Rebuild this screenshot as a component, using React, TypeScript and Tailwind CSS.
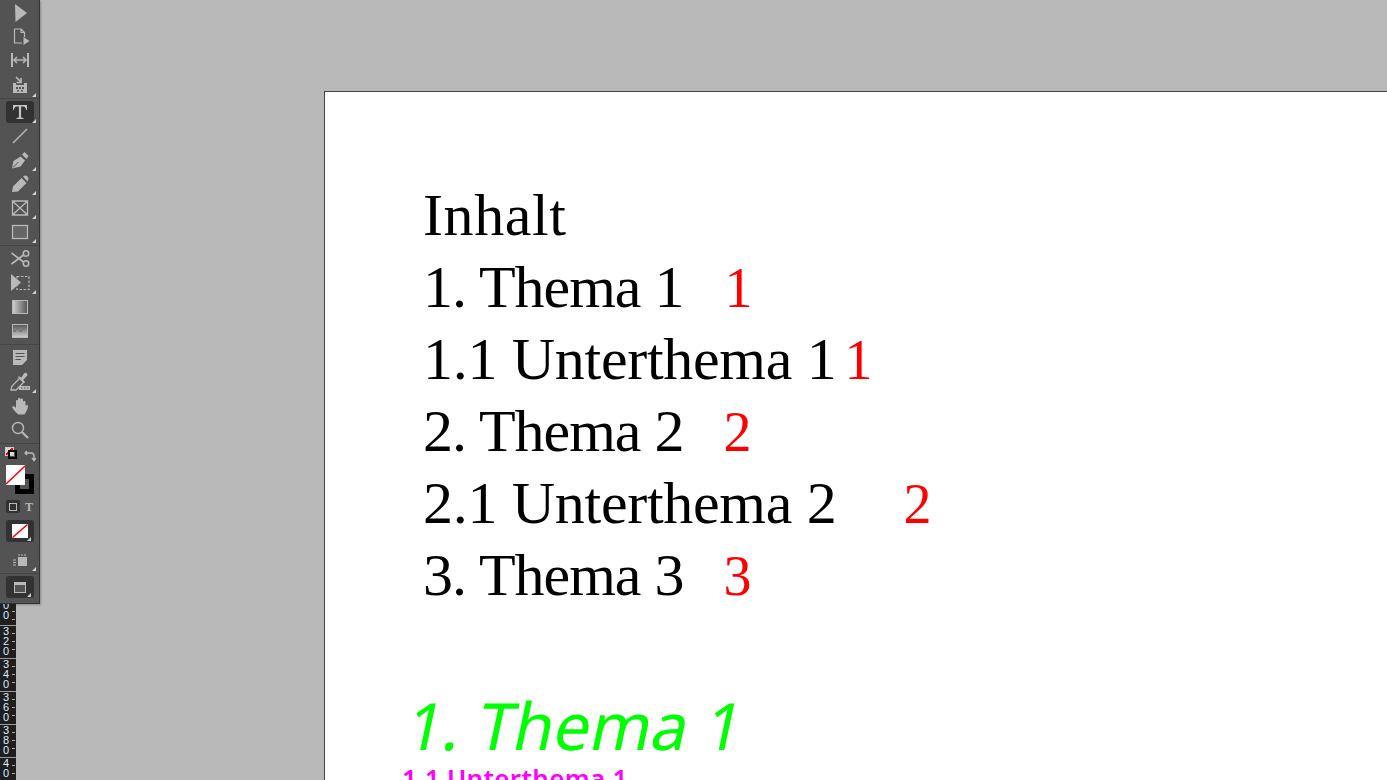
import React from 'react';

type Tool = {
  key: string;
  mt: string;
  corner?: boolean;
  active?: boolean;
  icon: React.ReactNode;
};

const Corner = () => (
  <svg className="absolute right-[3px] bottom-[1px]" width="4" height="4" viewBox="0 0 4 4">
    <path d="M4 0V4H0Z" fill="#d0d0d0" />
  </svg>
);

const groupOne: Tool[] = [
  { key: 'select', mt: 'mt-px', icon: <path d="M7 3L7.5 21L19 12Z" fill="#b9b9b9" /> },
  {
    key: 'page',
    mt: '-mt-px',
    icon: (
      <g>
        <path d="M6.5 5H13L16.5 8.5V13M14 19H6.5V5M13 5V8.5H16.5" fill="none" stroke="#b9b9b9" strokeWidth="1.2" />
        <path d="M15.5 13L15.5 21L21.5 17Z" fill="#b9b9b9" />
      </g>
    ),
  },
  {
    key: 'gap',
    mt: 'mt-0',
    icon: (
      <g stroke="#b9b9b9" fill="none" strokeWidth="1.5">
        <path d="M4 5V19M20 5V19" strokeWidth="2" />
        <path d="M6 12H18" />
        <path d="M9 9L6 12L9 15M15 9L18 12L15 15" />
      </g>
    ),
  },
  {
    key: 'collect',
    mt: 'mt-[2px]',
    corner: true,
    icon: (
      <g>
        <path d="M5 9H8V11H16V9H19V19H5Z" fill="#b9b9b9" />
        <path d="M8 3L13 8M13 4V8.5H8.5" stroke="#b9b9b9" strokeWidth="1.6" fill="none" />
        <path d="M8 13h2v2H8zM11 13h2v2h-2zM14 13h2v2h-2zM9 16h2v1.5H9zM13 16h2v1.5h-2z" fill="#535353" />
      </g>
    ),
  },
];

const groupTwo: Tool[] = [
  {
    key: 'type',
    mt: 'mt-px',
    corner: true,
    active: true,
    icon: <path d="M5 5H19V10H18.2C17.8 8 17 6.4 15 6.4H13.1V17.6L15.5 18V19H8.5V18L10.9 17.6V6.4H9C7 6.4 6.2 8 5.8 10H5Z" fill="#c4c4c4" />,
  },
  { key: 'line', mt: 'mt-0', icon: <path d="M5 19L19 5" stroke="#b9b9b9" strokeWidth="1.5" /> },
  {
    key: 'pen',
    mt: 'mt-0',
    corner: true,
    icon: (
      <g>
        <path d="M4 20.5L5.5 13L12.5 8.5L17 12.5L12.5 18.5Z" fill="#b9b9b9" />
        <path d="M14 6.5L16.5 4L20.5 8L18.5 11Z" fill="#b9b9b9" />
        <path d="M5 19.5L10.5 14" stroke="#535353" strokeWidth="1" />
      </g>
    ),
  },
  {
    key: 'pencil',
    mt: 'mt-0',
    corner: true,
    icon: <path d="M4 20L5 14.5L13.5 6L18.5 11L10 19.5ZM15 4.5L16.5 3.7C17.5 3.2 18.2 3.4 18.8 4L20 5.2C20.6 6 20.6 6.6 20.2 7.3L19.5 9.5Z" fill="#b9b9b9" />,
  },
  {
    key: 'frame',
    mt: 'mt-0',
    corner: true,
    icon: <path d="M4.5 5H19.5V19H4.5ZM4.5 5L19.5 19M19.5 5L4.5 19" fill="none" stroke="#b9b9b9" strokeWidth="1.3" />,
  },
  {
    key: 'rect',
    mt: 'mt-0',
    corner: true,
    icon: <rect x="4.5" y="5.5" width="15" height="13" fill="#666666" stroke="#b9b9b9" strokeWidth="1.3" />,
  },
];

const groupThree: Tool[] = [
  {
    key: 'scissors',
    mt: 'mt-0',
    icon: (
      <g fill="none" stroke="#b9b9b9" strokeWidth="1.6">
        <circle cx="18" cy="7.5" r="2.7" />
        <circle cx="18" cy="17.5" r="2.7" />
        <path d="M3.5 7L15.5 16M3.5 18L15.5 9" />
      </g>
    ),
  },
  {
    key: 'transform',
    mt: 'mt-px',
    corner: true,
    icon: (
      <g>
        <rect x="9" y="5.5" width="12" height="13" fill="none" stroke="#b9b9b9" strokeWidth="1.2" strokeDasharray="2.5 1.5" />
        <path d="M3 3L3 20L13 11.5Z" fill="#b9b9b9" />
      </g>
    ),
  },
  {
    key: 'gradient',
    mt: 'mt-0',
    icon: (
      <g>
        <defs>
          <linearGradient id="swatch" x1="0" x2="1" y1="0" y2="0">
            <stop offset="0" stopColor="#d0d0d0" />
            <stop offset="1" stopColor="#555555" />
          </linearGradient>
        </defs>
        <rect x="4.5" y="5.5" width="15" height="13" fill="url(#swatch)" stroke="#b9b9b9" strokeWidth="1" />
      </g>
    ),
  },
  {
    key: 'feather',
    mt: 'mt-0',
    icon: (
      <g>
        <defs>
          <linearGradient id="feather" x1="0" x2="0" y1="0" y2="1">
            <stop offset="0" stopColor="#555555" />
            <stop offset="1" stopColor="#d0d0d0" />
          </linearGradient>
        </defs>
        <rect x="4.5" y="5.5" width="15" height="13" fill="url(#feather)" stroke="#b9b9b9" strokeWidth="1" />
        <path d="M8 9h3v2H8zM14 9h3v2h-3zM5 11h3v2H5zM11 11h3v2h-3z" fill="#777777" />
      </g>
    ),
  },
];

const groupFour: Tool[] = [
  {
    key: 'note',
    mt: 'mt-0',
    icon: (
      <g>
        <path d="M5 5H19V15L14 20H5Z" fill="#b9b9b9" />
        <path d="M7.5 8.5H16.5M7.5 11.5H16.5M7.5 14.5H13" stroke="#535353" strokeWidth="1.2" />
      </g>
    ),
  },
  {
    key: 'eyedropper',
    mt: 'mt-px',
    corner: true,
    icon: (
      <g>
        <path d="M3 20L4 16L12 8L16 12L8 20Z" fill="none" stroke="#b9b9b9" strokeWidth="1.3" />
        <path d="M11 6L13 8L16 3.5C17 2.5 18.5 2.5 19 3.5C19.7 4.5 19.5 5.5 18.5 6.5L15 10L17 12L15.5 13L10 7.5Z" fill="#b9b9b9" />
        <path d="M11 16H22V20H11Z" fill="#b9b9b9" />
        <path d="M13 17.5h1.5v1H13zM16 17.5h1.5v1H16zM19 17.5h1.5v1H19z" fill="#535353" />
      </g>
    ),
  },
  {
    key: 'hand',
    mt: 'mt-0',
    icon: (
      <path d="M4 13C5 11.5 7 12 8 14V7C8 5.5 10 5.5 10 7V5C10 3.5 12.5 3.5 12.5 5V5.5C12.5 4 15 4 15 5.5V8C15 6.5 17.5 6.5 17.5 8V12C18 10.5 20 10.5 20 12C20 15 18 18 16.5 20.5H10.5C8 19 5.5 16 4 13Z" fill="#b9b9b9" />
    ),
  },
  {
    key: 'zoom',
    mt: 'mt-0',
    icon: (
      <g fill="none" stroke="#b9b9b9">
        <circle cx="10" cy="10" r="5.5" strokeWidth="1.4" />
        <path d="M14 14L20 20" strokeWidth="2.2" />
      </g>
    ),
  },
];

const ToolRow = ({ tool }: { tool: Tool }) => (
  <div className={`${tool.mt} relative flex h-6 w-[39px] items-center justify-center`}>
    {tool.active && <div className="absolute top-[1px] left-[6px] h-[22px] w-[28px] rounded-[3px] bg-[#323232]" />}
    <svg className="relative ml-[1px]" width="24" height="24" viewBox="0 0 24 24">
      {tool.icon}
    </svg>
    {tool.corner && <Corner />}
  </div>
);

const Divider = ({ mt }: { mt: string }) => <div className={`${mt} h-px w-[39px] bg-[#454545]`} />;

const Toolbar = () => (
  <div className="h-[604px] w-10 shrink-0 border-r border-b border-[#333333] bg-[#535353] shadow-[1px_1px_2px_rgba(0,0,0,0.25)]">
    {groupOne.map(t => <ToolRow key={t.key} tool={t} />)}
    <Divider mt="mt-0" />
    {groupTwo.map(t => <ToolRow key={t.key} tool={t} />)}
    <Divider mt="mt-px" />
    {groupThree.map(t => <ToolRow key={t.key} tool={t} />)}
    <Divider mt="mt-px" />
    {groupFour.map(t => <ToolRow key={t.key} tool={t} />)}
    <Divider mt="mt-px" />

    {/* fill and stroke */}
    <div className="relative h-[55px] w-[39px]">
      <div className="absolute top-[3px] left-[5px] h-[9px] w-[9px] border border-[#cfcfcf] bg-[#d8d8d8]">
        <div className="h-full w-full bg-[linear-gradient(135deg,transparent_40%,#ff0000_40%,#ff0000_60%,transparent_60%)]" />
      </div>
      <div className="absolute top-[6px] left-[8px] h-[9px] w-[9px] border-2 border-black bg-transparent" />
      <svg className="absolute top-[6px] left-[24px]" width="12" height="12" viewBox="0 0 12 12">
        <path d="M1 3H7C9 3 10 4 10 6V10M8 8L10 10.5L11.8 8M3 1L1 3L3 5" fill="none" stroke="#b9b9b9" strokeWidth="1.4" />
      </svg>
      <div className="absolute top-[30px] left-[15px] h-[20px] w-[19px] bg-black" />
      <div className="absolute top-[35px] left-[20px] h-[10px] w-[9px] bg-[#535353]" />
      <div className="absolute top-[21px] left-[6px] h-5 w-[19px] bg-white">
        <svg className="h-full w-full" viewBox="0 0 19 20">
          <path d="M0 19L19 1" stroke="#ff0000" strokeWidth="1.6" />
        </svg>
      </div>
    </div>

    {/* formatting affects */}
    <div className="ml-[6px] flex h-[15px] w-[33px] items-center">
      <div className="flex h-[13px] w-[14px] items-center justify-center rounded-[2px] bg-[#323232]">
        <div className="h-2 w-2 border border-[#b9b9b9]" />
      </div>
      <span className="ml-[5px] font-['Liberation_Serif',serif] text-[12px] leading-none font-bold text-[#b9b9b9]">T</span>
    </div>

    {/* apply none */}
    <div className="relative mt-[6px] ml-[6px] flex h-[22px] w-[28px] items-center justify-center rounded-[3px] bg-[#323232]">
      <svg width="16" height="14" viewBox="0 0 16 14">
        <rect width="16" height="14" fill="#ffffff" />
        <path d="M0.5 13.5L15.5 0.5" stroke="#ff0000" strokeWidth="1.5" />
      </svg>
      <Corner />
    </div>

    {/* view mode */}
    <div className="relative mt-[8px] flex h-[22px] w-[39px] items-center justify-center">
      <svg className="ml-[1px]" width="16" height="14" viewBox="0 0 16 14">
        <path d="M6 3h9v9H6z" fill="#b9b9b9" />
        <path d="M1 6h3M1 8.5h3M1 11h3M7 0v2M10 0v2M13 0v2" stroke="#b9b9b9" strokeWidth="1" />
      </svg>
      <Corner />
    </div>
    <Divider mt="mt-px" />

    {/* screen mode */}
    <div className="relative mt-[2px] ml-[6px] flex h-[22px] w-[28px] items-center justify-center rounded-[3px] bg-[#323232]">
      <svg width="12" height="11" viewBox="0 0 12 11">
        <rect x="0.5" y="0.5" width="11" height="10" fill="#535353" stroke="#b9b9b9" />
        <path d="M0 0H12V3H0Z" fill="#b9b9b9" />
      </svg>
      <Corner />
    </div>
  </div>
);

const RulerSegment = ({ digits, clip }: { digits: string[]; clip?: boolean }) => (
  <div className={`flex w-4 shrink-0 ${clip ? 'h-[21px] items-end overflow-hidden pb-[5px]' : 'h-[33px] border-t border-[#9a9a9a]'}`}>
    <div className="w-3 text-center font-['Liberation_Sans',sans-serif] text-[11px] leading-[10px] text-[#d8ecff]">
      {digits.map((d, i) => <div key={i}>{d}</div>)}
    </div>
    <div className={`flex w-1 flex-col gap-[7px] ${clip ? '' : 'pt-[7px]'}`}>
      <div className="h-px w-[3px] bg-[#aaaaaa]" />
      <div className="h-px w-[3px] bg-[#aaaaaa]" />
      <div className="h-px w-[3px] bg-[#aaaaaa]" />
    </div>
  </div>
);

const Ruler = () => (
  <div className="flex w-4 flex-1 flex-col overflow-hidden bg-[#1f1f1f]">
    <RulerSegment clip digits={['0', '0']} />
    <RulerSegment digits={['3', '2', '0']} />
    <RulerSegment digits={['3', '4', '0']} />
    <RulerSegment digits={['3', '6', '0']} />
    <RulerSegment digits={['3', '8', '0']} />
    <RulerSegment digits={['4', '0']} />
  </div>
);

const tocRows = [
  { label: '1. Thema 1', page: '1', gap: 'ml-[41px]', track: 'tracking-[-1px]' },
  { label: '1.1 Unterthema 1', page: '1', gap: 'ml-[8px]', track: 'tracking-[-0.3px]' },
  { label: '2. Thema 2', page: '2', gap: 'ml-[40px]', track: 'tracking-[-1px]' },
  { label: '2.1 Unterthema 2', page: '2', gap: 'ml-[67px]', track: 'tracking-[-0.3px]' },
  { label: '3. Thema 3', page: '3', gap: 'ml-[40px]', track: 'tracking-[-1px]' },
];

export default function App() {
  return (
    <div className="flex h-[780px] w-[1387px] overflow-hidden bg-[#b9b9b9]">
      <div className="flex w-10 shrink-0 flex-col">
        <Toolbar />
        <Ruler />
      </div>
      <div className="mt-[91px] ml-[284px] flex-1 border-t border-l border-[#444444] bg-white pt-[87px] pl-[98px]">
        <div className="font-['Liberation_Serif',serif] text-[60px] leading-[72px] text-black">
          <div className="tracking-[0.6px]">Inhalt</div>
          {tocRows.map(row => (
            <div key={row.label} className={`${row.track} h-[72px] whitespace-nowrap`}>
              {row.label}
              <span className={`${row.gap} text-[56px] leading-none text-[#ff0000]`}>{row.page}</span>
            </div>
          ))}
        </div>
        <div className="mt-[81px] -ml-[15px] inline-block -skew-x-12 font-['Noto_Sans',sans-serif] text-[65px] leading-[66px] whitespace-nowrap text-[#00ff00]">
          1. Thema 1
        </div>
        <div className="mt-[5px] -ml-[21px] font-['Noto_Sans',sans-serif] text-[26px] leading-[30px] font-semibold tracking-[0.3px] whitespace-nowrap text-[#ff00ff]">
          1.1 Unterthema 1
        </div>
      </div>
    </div>
  );
}
